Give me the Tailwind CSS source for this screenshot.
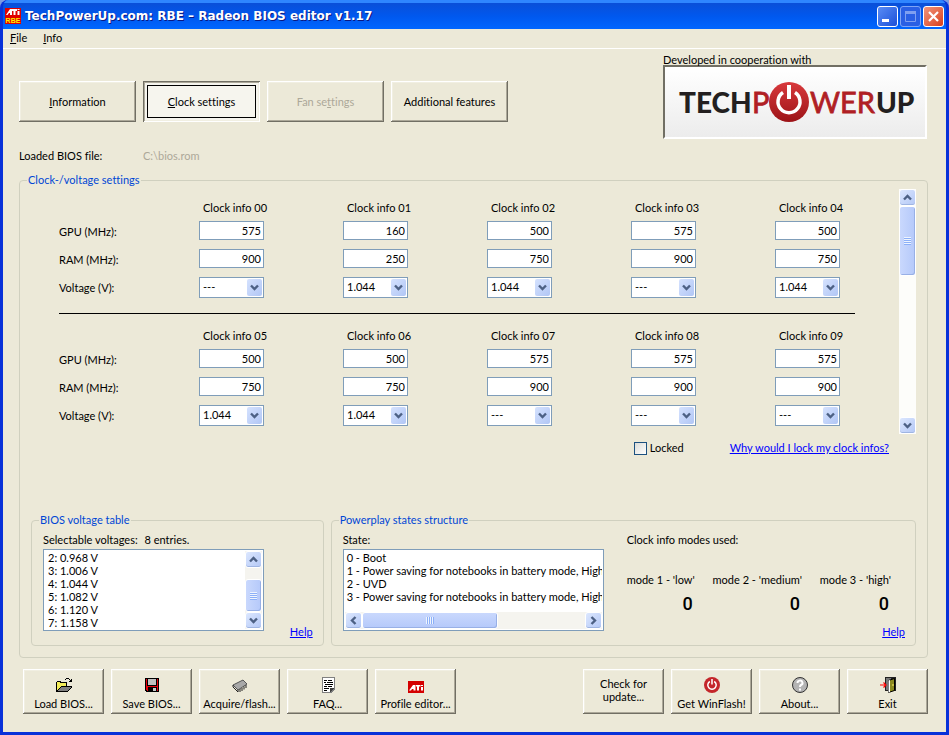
<!DOCTYPE html>
<html lang="en">
<head>
    <meta charset="UTF-8">
    <meta name="viewport" content="width=device-width, initial-scale=1.0">
    <title>RBE - Radeon BIOS editor</title>
    <script src="https://cdn.jsdelivr.net/npm/@tailwindcss/browser@4"></script>
</head>
<body class="bg-[#7b9be0] font-['Lato','Liberation_Sans',sans-serif] [font-variant-ligatures:none] text-[11px] leading-4 text-black">
<div class="min-h-screen flex flex-col rounded-t-lg overflow-hidden bg-[#0046e0] border-x-3 border-b-3 border-[#0831d9]">

    <!-- Title bar -->
    <header class="h-[29px] -mx-[3px] px-[5px] flex items-center bg-linear-to-b from-[#0a4fd8] via-[#0058ee] to-[#0066ff] border-t-3 border-[#2f86ff]">
        <svg class="w-4 h-4 shrink-0" viewBox="0 0 16 16" aria-hidden="true">
            <rect width="16" height="16" fill="#e00000"/>
            <path d="M1 7L5 1h2v6H5V5H4L2.500 7zM7 1h5v2h-1.500v4h-2V3H7zM12.500 3h2v4h-2zM12.500 1h2v1h-2z" fill="#fff"/>
            <text x="8" y="15" text-anchor="middle" font-family="Liberation Sans" font-size="7" font-weight="bold" fill="#ffee00">RBE</text>
        </svg>
        <h1 class="ml-1 flex-1 font-['DejaVu_Sans',sans-serif] font-bold text-xs text-white [text-shadow:1px_1px_#0a1883]">TechPowerUp.com: RBE – Radeon BIOS editor v1.17</h1>
        <div class="flex gap-[2px]">
            <button aria-label="Minimize" class="w-[21px] h-[21px] rounded-[3px] border border-white bg-linear-to-br from-[#5a8cf5] to-[#1c4fd8]">
                <svg viewBox="0 0 19 19"><rect x="4" y="12" width="7" height="3" fill="#fff"/></svg>
            </button>
            <button aria-label="Maximize" disabled class="w-[21px] h-[21px] rounded-[3px] border border-[#7fa4f5] bg-[#2a5fe4]">
                <svg viewBox="0 0 19 19"><path d="M4.500 5v9.500h10V5" fill="none" stroke="#7f9ff0"/><rect x="4" y="4" width="11" height="3" fill="#7f9ff0"/></svg>
            </button>
            <button aria-label="Close" class="w-[21px] h-[21px] rounded-[3px] border border-white bg-linear-to-br from-[#f0937a] to-[#d83c12]">
                <svg viewBox="0 0 19 19"><path d="M5 5l9 9M14 5l-9 9" stroke="#fff" stroke-width="2.200"/></svg>
            </button>
        </div>
    </header>

    <!-- Menu bar -->
    <nav class="h-5 px-[7px] pb-[2px] flex gap-4 items-center bg-[#ece9d8] border-b border-white">
        <a href="#"><u>F</u>ile</a>
        <a href="#"><u>I</u>nfo</a>
    </nav>

    <main class="flex-1 bg-[#ece9d8] pb-[18px]">
        <div class="px-4 pr-[19px] flex justify-between items-start">
            <div class="mt-8 flex gap-[7px]">
                <button class="w-[117px] h-[41px] shadow-[inset_-1px_-1px_#716f64,inset_1px_1px_#fff,inset_-2px_-2px_#aca899,inset_2px_2px_#f1efe2]"><u>I</u>nformation</button>
                <button class="w-[117px] h-[41px] p-1 bg-[#f6f5ee] shadow-[inset_1px_1px_#716f64,inset_-1px_-1px_#fff,inset_2px_2px_#aca899,inset_-2px_-2px_#f1efe2]">
                    <span class="h-full flex items-center justify-center border border-black"><span><u>C</u>lock settings</span></span>
                </button>
                <button disabled class="w-[117px] h-[41px] text-[#aca899] shadow-[inset_-1px_-1px_#716f64,inset_1px_1px_#fff,inset_-2px_-2px_#aca899,inset_2px_2px_#f1efe2]">Fan se<u>t</u>tings</button>
                <button class="w-[117px] h-[41px] shadow-[inset_-1px_-1px_#716f64,inset_1px_1px_#fff,inset_-2px_-2px_#aca899,inset_2px_2px_#f1efe2]">Additional features</button>
            </div>
            <div class="w-[264px] pt-[3px]">
                <p class="h-[13px]">Developed in cooperation with</p>
                <a href="#" class="block h-[74px] bg-linear-to-b from-white to-[#ececec] border-2 border-t-[#716f64] border-l-[#716f64] border-b-white border-r-white">
                    <svg class="w-full h-full" viewBox="0 0 260 70" role="img" aria-label="TechPowerUp">
                        <defs>
                            <linearGradient id="disc" x2="0" y2="1"><stop stop-color="#d8393c"/><stop offset="1" stop-color="#9c1317"/></linearGradient>
                        </defs>
                        <g font-family="Lato" font-weight="900" font-size="28">
                            <text x="14" y="46" fill="#231f20">TECH</text>
                            <text x="211" y="46" fill="#231f20">UP</text>
                        </g>
                        <g font-family="Lato" font-weight="400" font-size="29" fill="#b01f24" stroke="#b01f24" stroke-width="0.800">
                            <text x="87" y="46">P</text>
                            <text x="145" y="46">WER</text>
                        </g>
                        <circle cx="124" cy="35" r="20" fill="url(#disc)"/>
                        <path d="M118 25.500a11 11 0 1 0 12 0" fill="none" stroke="#fff" stroke-width="3.500"/>
                        <path d="M124 18v14" stroke="#fff" stroke-width="4"/>
                    </svg>
                </a>
            </div>
        </div>

        <div class="mt-[9px] px-4 flex">
            <span class="w-[124px]">Loaded BIOS file:</span>
            <span class="text-[#aca899]">C:\bios.rom</span>
        </div>

        <fieldset class="mt-2 ml-4 mr-[18px] min-w-0 px-[11px] pb-[11px] border border-[#d0d0bf] rounded">
            <legend class="-ml-1 px-[1px] text-[#0046d5]">Clock-/voltage settings</legend>

            <div class="pt-px flex">
                <div id="clock-infos" class="mt-[10px] ml-7 mr-11 flex-1"></div>
                <div class="w-[17px] h-[245px] flex flex-col bg-[#fdfdfa]">
                    <button aria-label="Scroll up" class="h-[17px] p-[3px] rounded-[3px] border border-white bg-linear-to-br from-[#dce7fe] to-[#b4c8f6] shadow-[inset_0_-1px_#9fb5e2]">
                        <svg viewBox="0 0 9 7"><path d="M1 5.500L4.500 2 8 5.500" fill="none" stroke="#4d6185" stroke-width="2.400"/></svg>
                    </button>
                    <div class="h-[70px] flex items-center justify-center rounded-[3px] border border-white bg-linear-to-r from-[#c9d8fd] to-[#b5c9fa] shadow-[inset_-1px_-1px_#98b0e6]">
                        <span class="w-[7px] h-2 bg-[repeating-linear-gradient(#eef4fe_0_1px,#8cb0f8_1px_2px)]"></span>
                    </div>
                    <button aria-label="Scroll down" class="mt-auto h-[17px] p-[3px] rounded-[3px] border border-white bg-linear-to-br from-[#dce7fe] to-[#b4c8f6] shadow-[inset_0_-1px_#9fb5e2]">
                        <svg viewBox="0 0 9 7"><path d="M1 1.500L4.500 5 8 1.500" fill="none" stroke="#4d6185" stroke-width="2.400"/></svg>
                    </button>
                </div>
            </div>

            <div class="mt-[6px] mr-[27px] flex justify-end items-center">
                <label class="w-24 flex items-center gap-[3px]">
                    <input type="checkbox" class="appearance-none w-[13px] h-[13px] border border-[#1c5180] bg-linear-to-br from-[#dcdcd7] to-white">
                    Locked
                </label>
                <a href="#" class="text-[#0000ff] underline">Why would I lock my clock infos?</a>
            </div>

            <div class="mt-14 grid grid-cols-[1fr_2fr] gap-[7px]">
                <fieldset class="min-w-0 pl-[11px] pr-[10px] border border-[#d0d0bf] rounded">
                    <legend class="-ml-1 px-[1px] text-[#0046d5]">BIOS voltage table</legend>
                    <div class="pt-1 flex justify-between">
                        <div class="pb-[14px]">
                            <p><span class="mr-1">Selectable voltages:</span> <span>8 entries.</span></p>
                            <div class="mt-px w-[221px] h-[82px] flex justify-between border border-[#7f9db9] bg-white p-px">
                                <ul class="pl-[3px] leading-[13px]">
                                    <li>2: 0.968 V</li>
                                    <li>3: 1.006 V</li>
                                    <li>4: 1.044 V</li>
                                    <li>5: 1.082 V</li>
                                    <li>6: 1.120 V</li>
                                    <li>7: 1.158 V</li>
                                </ul>
                                <div class="w-[17px] flex flex-col bg-[#f5f4ef]">
                                    <button aria-label="Scroll up" class="h-[17px] p-[3px] rounded-[3px] border border-white bg-linear-to-br from-[#dce7fe] to-[#b4c8f6] shadow-[inset_0_-1px_#9fb5e2]">
                                        <svg viewBox="0 0 9 7"><path d="M1 5.500L4.500 2 8 5.500" fill="none" stroke="#4d6185" stroke-width="2.400"/></svg>
                                    </button>
                                    <div class="mt-auto h-[33px] flex items-center justify-center rounded-[3px] border border-white bg-linear-to-r from-[#c9d8fd] to-[#b5c9fa] shadow-[inset_-1px_-1px_#98b0e6]">
                                        <span class="w-[7px] h-2 bg-[repeating-linear-gradient(#eef4fe_0_1px,#8cb0f8_1px_2px)]"></span>
                                    </div>
                                    <button aria-label="Scroll down" class="h-[17px] p-[3px] rounded-[3px] border border-white bg-linear-to-br from-[#dce7fe] to-[#b4c8f6] shadow-[inset_0_-1px_#9fb5e2]">
                                        <svg viewBox="0 0 9 7"><path d="M1 1.500L4.500 5 8 1.500" fill="none" stroke="#4d6185" stroke-width="2.400"/></svg>
                                    </button>
                                </div>
                            </div>
                        </div>
                        <a href="#" class="self-end mb-[5px] text-[#0000ff] underline">Help</a>
                    </div>
                </fieldset>

                <fieldset class="min-w-0 pl-[11px] pr-[10px] border border-[#d0d0bf] rounded">
                    <legend class="-ml-1 px-[1px] text-[#0046d5]">Powerplay states structure</legend>
                    <div class="pt-1 flex">
                        <div class="pb-[14px]">
                            <p>State:</p>
                            <div class="mt-px w-[261px] h-[82px] flex flex-col justify-between border border-[#7f9db9] bg-white p-px">
                                <ul class="pl-[2px] leading-[13px] whitespace-nowrap overflow-hidden">
                                    <li>0 - Boot</li>
                                    <li>1 - Power saving for notebooks in battery mode, High p</li>
                                    <li>2 - UVD</li>
                                    <li>3 - Power saving for notebooks in battery mode, High p</li>
                                </ul>
                                <div class="h-[17px] flex bg-[#f5f4ef]">
                                    <button aria-label="Scroll left" class="w-[17px] p-[3px] rounded-[3px] border border-white bg-linear-to-br from-[#dce7fe] to-[#b4c8f6] shadow-[inset_0_-1px_#9fb5e2]">
                                        <svg viewBox="0 0 9 9"><path d="M6.500 1L3 4.500 6.500 8" fill="none" stroke="#4d6185" stroke-width="2.400"/></svg>
                                    </button>
                                    <div class="w-[136px] flex items-center justify-center rounded-[3px] border border-white bg-linear-to-b from-[#c9d8fd] to-[#b5c9fa] shadow-[inset_-1px_-1px_#98b0e6]">
                                        <span class="w-2 h-[7px] bg-[repeating-linear-gradient(90deg,#eef4fe_0_1px,#8cb0f8_1px_2px)]"></span>
                                    </div>
                                    <button aria-label="Scroll right" class="ml-auto w-[17px] p-[3px] rounded-[3px] border border-white bg-linear-to-br from-[#dce7fe] to-[#b4c8f6] shadow-[inset_0_-1px_#9fb5e2]">
                                        <svg viewBox="0 0 9 9"><path d="M2.500 1L6 4.500 2.500 8" fill="none" stroke="#4d6185" stroke-width="2.400"/></svg>
                                    </button>
                                </div>
                            </div>
                        </div>
                        <div class="ml-[23px] flex-1 flex flex-col">
                            <p>Clock info modes used:</p>
                            <dl class="mt-6 mr-[14px] flex justify-between whitespace-nowrap">
                                <div>
                                    <dt>mode 1 - 'low'</dt>
                                    <dd class="pt-1 pr-[2px] text-right font-['Roboto',sans-serif] font-medium text-lg leading-6">0</dd>
                                </div>
                                <div>
                                    <dt>mode 2 - 'medium'</dt>
                                    <dd class="pt-1 pr-[2px] text-right font-['Roboto',sans-serif] font-medium text-lg leading-6">0</dd>
                                </div>
                                <div>
                                    <dt>mode 3 - 'high'</dt>
                                    <dd class="pt-1 pr-[2px] text-right font-['Roboto',sans-serif] font-medium text-lg leading-6">0</dd>
                                </div>
                            </dl>
                            <a href="#" class="mt-auto mb-[5px] self-end text-[#0000ff] underline">Help</a>
                        </div>
                    </div>
                </fieldset>
            </div>
        </fieldset>

        <!-- Bottom buttons -->
        <div class="mt-[11px] pl-5 pr-[18px] flex gap-[7px]">
            <button class="w-[81px] h-[45px] pb-[2px] flex flex-col items-center justify-end gap-[3px] whitespace-nowrap shadow-[inset_-1px_-1px_#716f64,inset_1px_1px_#fff,inset_-2px_-2px_#aca899,inset_2px_2px_#f1efe2]">
                <svg class="w-4 h-4" viewBox="0 0 16 16" shape-rendering="crispEdges" aria-hidden="true">
                    <path d="M0 5h1V4h4v1h6v4h5v1l-4 5H0z" fill="#000"/>
                    <path d="M1 5h3v1h6v3H5l-4 4z" fill="#f4ee5a"/>
                    <path d="M5 10h10l-3 4H2z" fill="#808080"/>
                    <path d="M9 2h1V1h3v1h1v1h1V2h1v3h-3V4h1V3h-1V2h-3v1H9z" fill="#000"/>
                </svg>
                Load BIOS...
            </button>
            <button class="w-[81px] h-[45px] pb-[2px] flex flex-col items-center justify-end gap-[3px] whitespace-nowrap shadow-[inset_-1px_-1px_#716f64,inset_1px_1px_#fff,inset_-2px_-2px_#aca899,inset_2px_2px_#f1efe2]">
                <svg class="w-4 h-4" viewBox="0 0 16 16" shape-rendering="crispEdges" aria-hidden="true">
                    <path d="M1 1h14v14H2l-1-1z" fill="#000"/>
                    <path d="M2 2h12v12H3l-1-1z" fill="#e8000c"/>
                    <rect x="3" y="1" width="10" height="8" fill="#000"/>
                    <rect x="4" y="2" width="8" height="6" fill="#c0c0c0"/>
                    <rect x="4" y="10" width="9" height="5" fill="#000"/>
                    <rect x="9" y="11" width="3" height="3" fill="#c8c8c8"/>
                </svg>
                Save BIOS...
            </button>
            <button class="w-[81px] h-[45px] pb-[2px] flex flex-col items-center justify-end gap-[3px] whitespace-nowrap shadow-[inset_-1px_-1px_#716f64,inset_1px_1px_#fff,inset_-2px_-2px_#aca899,inset_2px_2px_#f1efe2]">
                <svg class="w-4 h-4" viewBox="0 0 16 16" aria-hidden="true">
                    <path d="M1 8l10-5 4 4-9 6z" fill="#a8a8a8" stroke="#555"/>
                    <path d="M1 8v2l5 5v-2M8 12v3M10 11v3M12 9.500v3M14 8v3" fill="none" stroke="#222"/>
                </svg>
                Acquire/flash...
            </button>
            <button class="w-[81px] h-[45px] pb-[2px] flex flex-col items-center justify-end gap-[3px] whitespace-nowrap shadow-[inset_-1px_-1px_#716f64,inset_1px_1px_#fff,inset_-2px_-2px_#aca899,inset_2px_2px_#f1efe2]">
                <svg class="w-4 h-4" viewBox="0 0 16 16" shape-rendering="crispEdges" aria-hidden="true">
                    <path d="M2 0h13v12l-4 4H2z" fill="#808080"/>
                    <path d="M3 1h11v10h-4v4H3z" fill="#fff"/>
                    <path d="M4 3h3v1H4zM8 3h4v1H8zM4 5h2v1H4zM7 5h6v1H7zM5 7h8v1H5zM4 9h3v1H4zM8 9h4v1H8zM4 11h5v1H4zM4 13h3v1H4z" fill="#000"/>
                    <path d="M10 15v-4h4z" fill="#404040"/>
                </svg>
                FAQ...
            </button>
            <button class="w-[81px] h-[45px] pb-[2px] flex flex-col items-center justify-end gap-[3px] whitespace-nowrap shadow-[inset_-1px_-1px_#716f64,inset_1px_1px_#fff,inset_-2px_-2px_#aca899,inset_2px_2px_#f1efe2]">
                <svg class="w-4 h-4" viewBox="0 0 16 16" aria-hidden="true">
                    <rect y="4" width="16" height="12" fill="#d40000"/>
                    <path d="M1 13.500L5 8h2.500v5.500h-2V12H4l-1 1.500zM8 8h4.500v1.500H11v4H9v-4H8zM13 10h2v3.500h-2zM13 8h2v1h-2z" fill="#fff"/>
                </svg>
                Profile editor...
            </button>
            <button class="ml-auto w-[81px] h-[45px] pb-[3px] leading-[13px] shadow-[inset_-1px_-1px_#716f64,inset_1px_1px_#fff,inset_-2px_-2px_#aca899,inset_2px_2px_#f1efe2]">Check for<br>update...</button>
            <button class="w-[81px] h-[45px] pb-[2px] flex flex-col items-center justify-end gap-[3px] whitespace-nowrap shadow-[inset_-1px_-1px_#716f64,inset_1px_1px_#fff,inset_-2px_-2px_#aca899,inset_2px_2px_#f1efe2]">
                <svg class="w-4 h-4" viewBox="0 0 16 16" aria-hidden="true">
                    <circle cx="8" cy="8" r="8" fill="#c4262b"/>
                    <path d="M5.800 4.500a4.200 4.200 0 1 0 4.400 0M8 2v5.500" fill="none" stroke="#fff" stroke-width="1.500"/>
                </svg>
                Get WinFlash!
            </button>
            <button class="w-[81px] h-[45px] pb-[2px] flex flex-col items-center justify-end gap-[3px] whitespace-nowrap shadow-[inset_-1px_-1px_#716f64,inset_1px_1px_#fff,inset_-2px_-2px_#aca899,inset_2px_2px_#f1efe2]">
                <svg class="w-4 h-4" viewBox="0 0 16 16" aria-hidden="true">
                    <circle cx="8" cy="8" r="7.500" fill="#b4b4b4" stroke="#333"/>
                    <path d="M5.500 6a2.500 2.300 0 1 1 3.500 2q-1 .500-1 2M8 11.500v2" fill="none" stroke="#fff" stroke-width="2"/>
                </svg>
                About...
            </button>
            <button class="w-[81px] h-[45px] pb-[2px] flex flex-col items-center justify-end gap-[3px] whitespace-nowrap shadow-[inset_-1px_-1px_#716f64,inset_1px_1px_#fff,inset_-2px_-2px_#aca899,inset_2px_2px_#f1efe2]">
                <svg class="w-4 h-4" viewBox="0 0 16 16" aria-hidden="true">
                    <rect x="5" width="11" height="14" fill="#222"/>
                    <rect x="6" y="1" width="5" height="12" fill="#777"/>
                    <path d="M8.500 3.500l6-2v12l-6 2z" fill="#8c8a20" stroke="#000"/>
                    <path d="M8.500 3.500l1.500-.500v12l-1.500.500z" fill="#fff"/>
                    <path d="M12 8h2" stroke="#ffee66"/>
                    <path d="M0 8h6M3.500 5.500L6 8l-2.500 2.500" fill="none" stroke="#f00" stroke-width="1.200"/>
                </svg>
                Exit
            </button>
        </div>
    </main>
</div>

<script>
    const groups = [
        [
            ["00", 575, 900, "---"], ["01", 160, 250, "1.044"], ["02", 500, 750, "1.044"],
            ["03", 575, 900, "---"], ["04", 500, 750, "1.044"]
        ],
        [
            ["05", 500, 750, "1.044"], ["06", 500, 750, "1.044"], ["07", 575, 900, "---"],
            ["08", 575, 900, "---"], ["09", 575, 900, "---"]
        ]
    ];

    const textCell = (name, value) => `
        <td class="pb-[2px]"><input type="text" aria-label="${name}" value="${value}"
            class="block w-[65px] h-[19px] px-[2px] text-right bg-white border border-[#7f9db9]"></td>`;

    const selectCell = (name, value) => `
        <td><div class="relative w-[65px]">
            <select aria-label="${name}" class="block appearance-none w-full h-[21px] pl-[3px] pb-px bg-white border border-[#7f9db9]"><option>${value}</option></select>
            <span class="absolute right-[2px] top-[2px] w-[15px] h-[17px] px-[3px] flex items-center rounded-[2px] bg-linear-to-br from-[#d5e2fe] to-[#b1c6f5] pointer-events-none">
                <svg viewBox="0 0 9 7"><path d="M1 1.500L4.500 5 8 1.500" fill="none" stroke="#4d6185" stroke-width="2.400"/></svg>
            </span>
        </div></td>`;

    const container = document.getElementById("clock-infos");
    container.innerHTML = groups.map((infos) => `
        <table class="w-full table-fixed">
            <colgroup><col class="w-[140px]"><col><col><col><col><col class="w-[80px]"></colgroup>
            <thead><tr class="h-[18px]"><td></td>${infos.map((c) => `<th class="p-0 pl-1 text-left font-normal whitespace-nowrap">Clock info ${c[0]}</th>`).join("")}</tr></thead>
            <tbody>
                <tr class="h-7"><th class="pt-[2px] text-left font-normal">GPU (MHz):</th>${infos.map((c) => textCell("GPU " + c[0], c[1])).join("")}</tr>
                <tr class="h-7"><th class="pt-[2px] text-left font-normal">RAM (MHz):</th>${infos.map((c) => textCell("RAM " + c[0], c[2])).join("")}</tr>
                <tr class="h-7"><th class="pt-[2px] text-left font-normal">Voltage (V):</th>${infos.map((c) => selectCell("Voltage " + c[0], c[3])).join("")}</tr>
            </tbody>
        </table>`).join(`<hr class="mt-3 mb-[13px] border-t border-black">`);
</script>
</body>
</html>
